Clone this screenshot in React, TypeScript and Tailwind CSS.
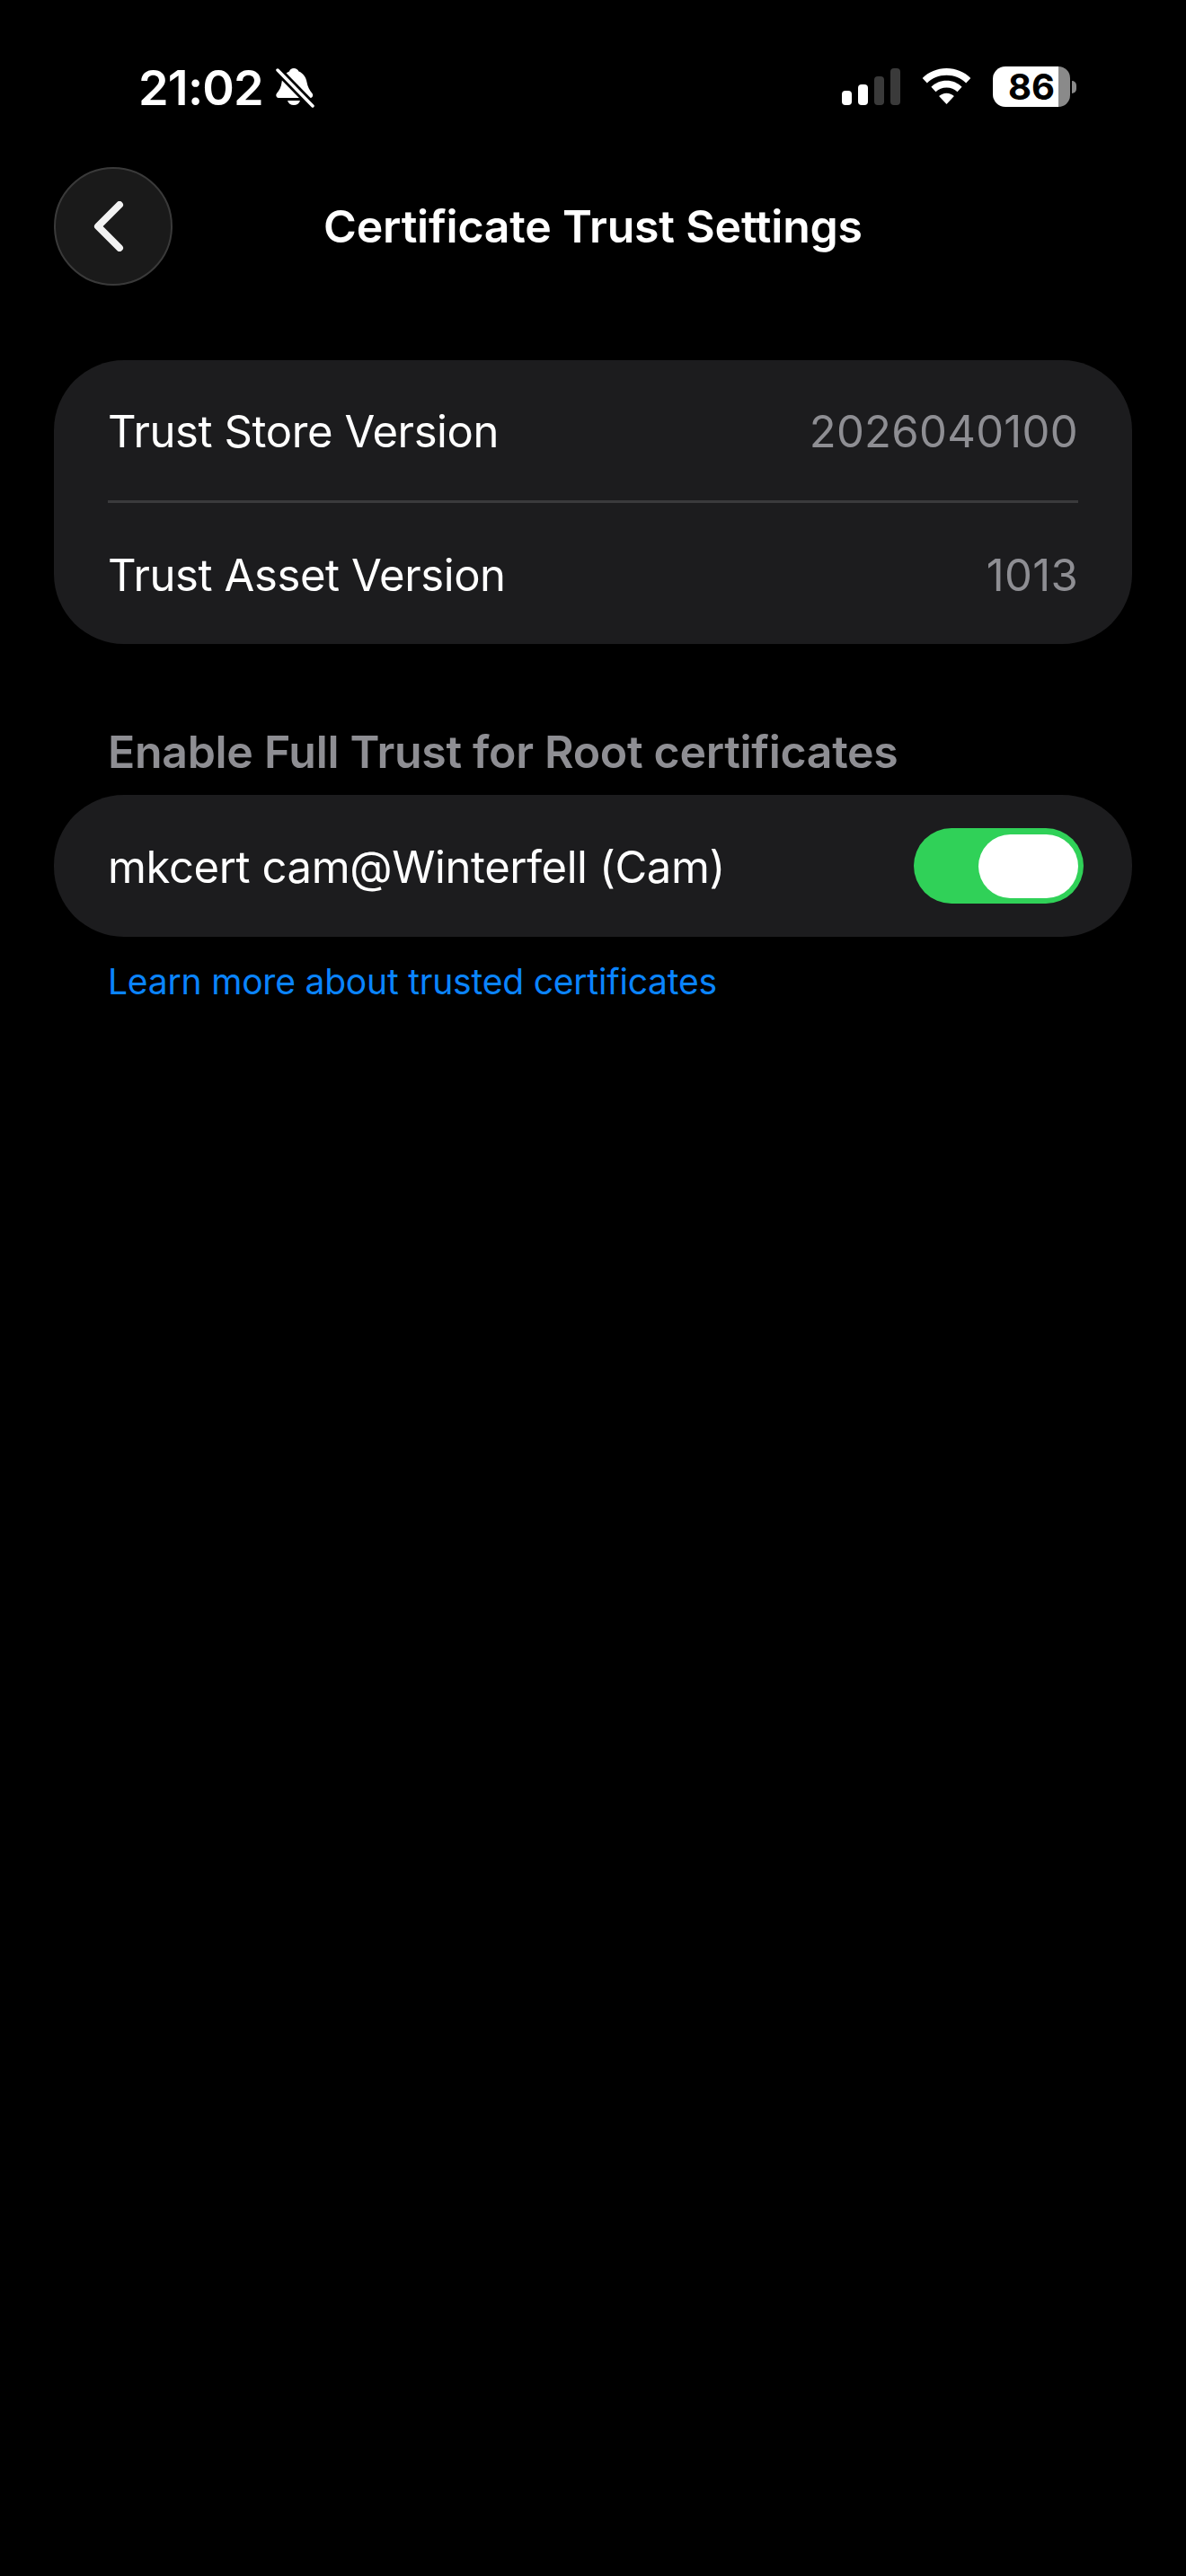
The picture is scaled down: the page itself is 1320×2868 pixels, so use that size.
import React from "react";

function SignalBars() {
  const bars = [
    { height: "h-[16px]", color: "bg-white" },
    { height: "h-[23px]", color: "bg-white" },
    { height: "h-[32px]", color: "bg-[#3a3a3a]" },
    { height: "h-[41px]", color: "bg-[#3a3a3a]" },
  ];
  return (
    <div className="flex items-end gap-[7px]">
      {bars.map((bar, i) => (
        <div key={i} className={`w-[11px] rounded-[4px] ${bar.height} ${bar.color}`} />
      ))}
    </div>
  );
}

function Wifi() {
  return (
    <svg width="57" height="42" viewBox="0 0 58 44" fill="white">
      <path d="M29 0C18 0 8.200 4.300 .9 11.500L6.300 17.200C12.100 11.500 20.100 8 29 8s16.900 3.500 22.700 9.200l5.400-5.700C49.800 4.300 40 0 29 0Z" />
      <path d="M29 14.500c-7 0-13.300 2.800-17.900 7.300l5.300 5.600c3.300-3.100 7.700-5 12.600-5s9.300 1.900 12.600 5l5.300-5.600C42.300 17.300 36 14.500 29 14.500Z" />
      <path d="M29 29c-3.400 0-6.500 1.300-8.800 3.500L29 42l8.800-9.500C35.500 30.300 32.400 29 29 29Z" />
    </svg>
  );
}

function Battery() {
  return (
    <div className="flex items-center">
      <div className="relative flex h-[45px] w-[86px]">
        <div className="h-full w-[73px] rounded-l-[14px] bg-white" />
        <div className="h-full w-[13px] rounded-r-[14px] bg-[#8a8a8a]" />
        <span className="absolute left-[17px] top-0 text-[40px] leading-[45px] font-bold tracking-normal text-black">86</span>
      </div>
      <div className="ml-[2px] h-[14px] w-[5px] rounded-r-full bg-[#8a8a8a]" />
    </div>
  );
}

function MutedBell() {
  return (
    <svg width="44" height="46" viewBox="0 0 44 46" fill="white">
      <path d="M20 1c2.500 0 4.500 1.500 5.500 3.500 5 2 8 6.500 9 12 .8 5 3 9 6 12.500 1.500 2 .5 5-2 5H3c-2.500 0-3.500-3-2-5 3-3.500 5-7.500 5.500-12 .5-5 3-10 8.500-12.500C15.500 2.500 17.500 1 20 1Z" />
      <path d="M13 37h14c-.8 3-3.500 5-7 5s-6.200-2-7-5Z" />
      <path d="M1 2 42 44" stroke="black" strokeWidth="9" fill="none" />
      <path d="M2 3 41 43" stroke="white" strokeWidth="3.500" strokeLinecap="round" fill="none" />
    </svg>
  );
}

function StatusBar() {
  return (
    <div className="flex h-[186px] items-start justify-between pl-[154px] pr-[122px] pt-[68px]">
      <div className="flex items-center gap-[14px]">
        <span className="text-[54px] leading-[60px] font-semibold tracking-[-0.8px] text-white">21:02</span>
        <MutedBell />
      </div>
      <div className="flex items-center gap-[23px] pt-[6px]">
        <SignalBars />
        <Wifi />
        <Battery />
      </div>
    </div>
  );
}

function Header() {
  return (
    <div className="relative flex h-[132px] items-center justify-center">
      <button className="absolute left-[60px] top-0 flex h-[132px] w-[132px] items-center justify-center rounded-full border-2 border-[#3a3a3a] bg-[#1a1a1a]">
        <svg width="34" height="56" viewBox="0 0 34 56" fill="none" className="mr-[10px]">
          <path d="M29 4 5 28l24 24" stroke="#f2f2f2" strokeWidth="8" strokeLinecap="round" strokeLinejoin="round" />
        </svg>
      </button>
      <h1 className="text-[50px] leading-[60px] font-semibold tracking-[-0.2px] text-white">Certificate Trust Settings</h1>
    </div>
  );
}

function InfoRow({ label, value, height }: { label: string; value: string; height: string }) {
  return (
    <div className={`flex items-center justify-between pt-[4px] ${height}`}>
      <span className="text-[49px] tracking-[-0.4px] text-white">{label}</span>
      <span className="text-[49px] tracking-[0.3px] text-[#8e8e93]">{value}</span>
    </div>
  );
}

function Toggle() {
  return (
    <div className="flex h-[84px] w-[189px] items-center justify-end rounded-full bg-[#30d158] pr-[6px]">
      <div className="h-[71px] w-[111px] rounded-full bg-white" />
    </div>
  );
}

export default function App() {
  return (
    <div className="h-[2868px] w-[1320px] bg-black font-['Inter',sans-serif]">
      <StatusBar />
      <Header />
      <div className="mx-[60px] mt-[83px] rounded-[78px] bg-[#1c1c1e] px-[60px]">
        <InfoRow label="Trust Store Version" value="2026040100" height="h-[156px]" />
        <div className="h-[3px] bg-[#3a3a3c]" />
        <InfoRow label="Trust Asset Version" value="1013" height="h-[157px]" />
      </div>
      <h2 className="mx-[120px] mt-[90px] text-[50px] leading-[60px] font-semibold tracking-[-0.3px] text-[#8e8e93]">
        Enable Full Trust for Root certificates
      </h2>
      <div className="mx-[60px] mt-[18px] flex h-[158px] items-center justify-between rounded-[78px] bg-[#1c1c1e] pl-[60px] pr-[54px]">
        <span className="pt-[3px] text-[49px] tracking-[-0.4px] text-white">mkcert cam@Winterfell (Cam)</span>
        <Toggle />
      </div>
      <a className="mx-[120px] mt-[26px] block text-[39px] leading-[48px] tracking-[-0.2px] text-[#0a84ff]">
        Learn more about trusted certificates
      </a>
    </div>
  );
}
